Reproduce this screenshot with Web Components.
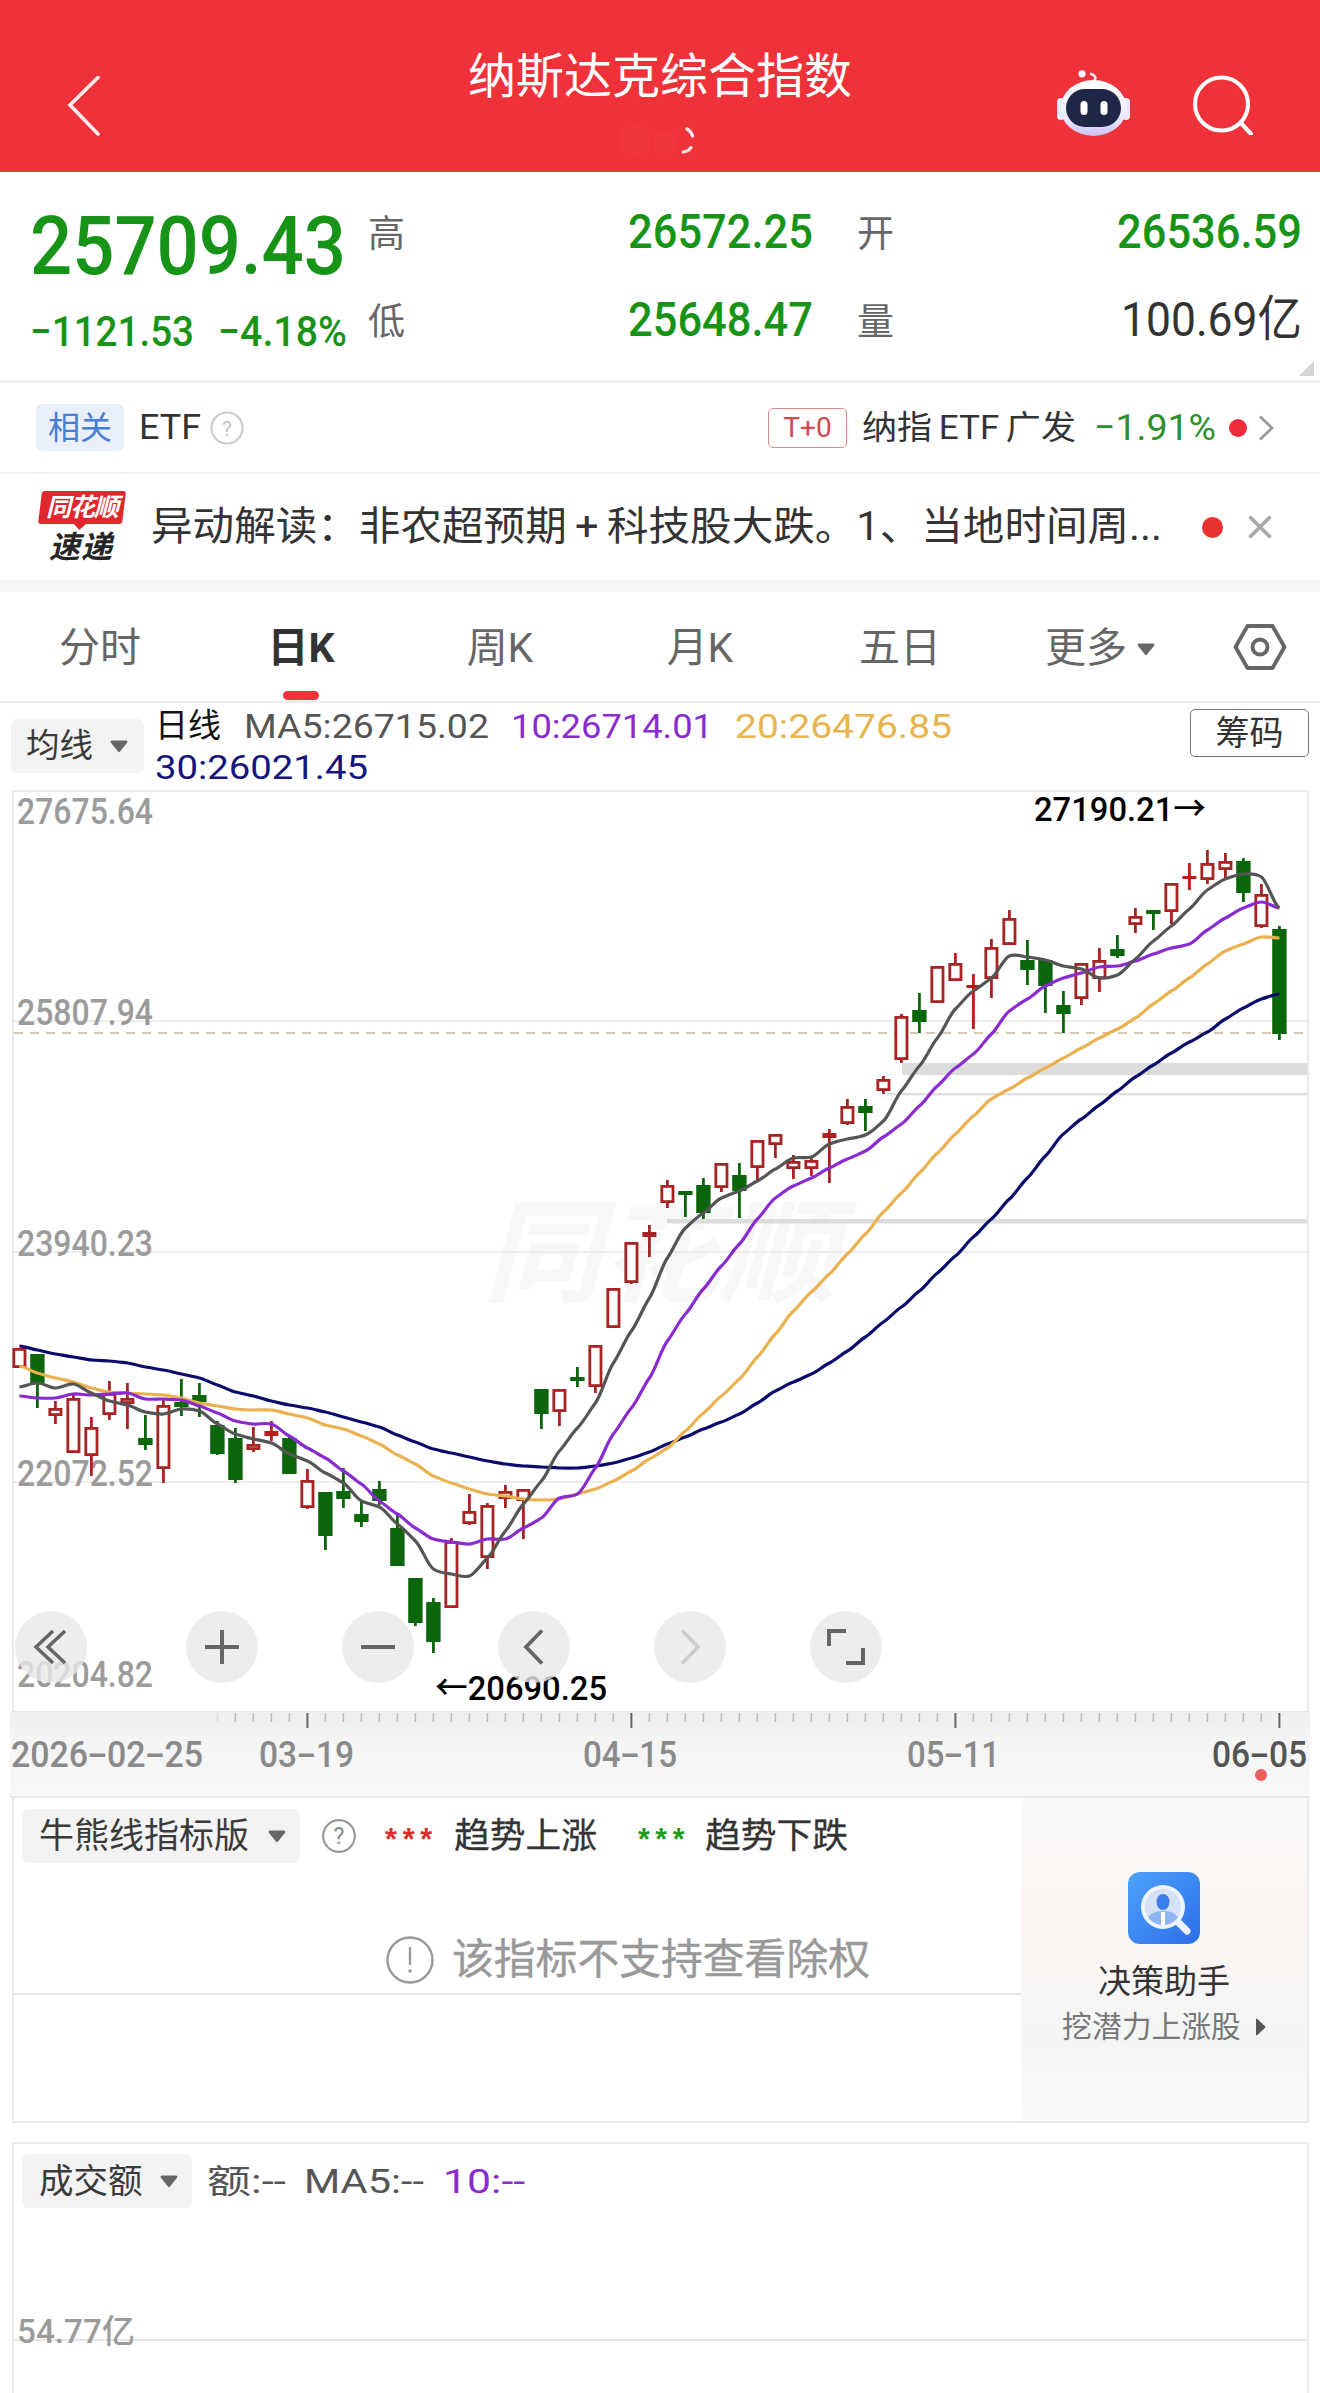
<!DOCTYPE html>
<html lang="zh-CN"><head><meta charset="utf-8"><title>纳斯达克综合指数</title>
<style>
html,body{margin:0;padding:0;background:#fff}
body{width:1320px;height:2393px;overflow:hidden;font-family:Roboto,"Noto Sans CJK SC",sans-serif;color:#333}
</style></head><body>
<top-bar></top-bar>
<quote-panel></quote-panel>
<etf-row></etf-row>
<news-row></news-row>
<period-tabs></period-tabs>
<legend-row></legend-row>
<kline-chart></kline-chart>
<time-axis></time-axis>
<bull-panel></bull-panel>
<volume-panel></volume-panel>
<script>
const dash='<span style="display:inline-block;width:.56em;text-align:center;transform:scaleX(1.75)">-</span>';
class FitText extends HTMLElement{
  constructor(){super();this.attachShadow({mode:'open'}).innerHTML='<style>:host{display:inline-block;white-space:nowrap;line-height:1;flex:none}span{display:inline-block;transform-origin:0 50%}</style><span><slot></slot></span>';}
  connectedCallback(){const w=+this.getAttribute('w');if(!w)return;const s=this.shadowRoot.querySelector('span');const n=s.getBoundingClientRect().width;this.style.width=w+'px';if(n)s.style.transform='scaleX('+(w/n)+')';}
}
customElements.define('fit-text',FitText);
const def=(n,html,after)=>customElements.define(n,class extends HTMLElement{constructor(){super();this.attachShadow({mode:'open'}).innerHTML=html;if(after)after(this.shadowRoot);}});

def('drop-tag',`<style>
:host{display:inline-flex;align-items:center;height:54px;background:#f3f3f3;border-radius:6px;padding:0 var(--pr,14px) 0 var(--pl,17px);gap:var(--gap,19px);color:#3a3a3a;line-height:1;flex:none;box-sizing:border-box;white-space:nowrap}
svg{display:block;flex:none}
</style><slot></slot><svg width="18" height="14" viewBox="0 0 18 14"><path d="M2 1.500h14a1.400 1.400 0 0 1 1.100 2.200L10 12.600a1.300 1.300 0 0 1-2 0L.9 3.700A1.400 1.400 0 0 1 2 1.500z" fill="#666"/></svg>`);

def('top-bar',`<style>
:host{display:grid;grid-template-columns:1fr auto 1fr;height:172px;background:#EF323A;color:#fff}
.l{padding:76px 0 0 67px}
.c{padding-top:53px;display:flex;flex-direction:column;align-items:center}
h1{margin:0;font-weight:400;font-size:48px;line-height:48px;white-space:nowrap}
.sp{margin-top:21px;display:block}
.r{display:flex;justify-content:flex-end;padding:70px 67px 0 0;gap:63px;align-items:flex-start}
svg{display:block}
.s{margin-top:5px}
</style>
<div class="l"><svg width="34" height="60" viewBox="0 0 34 60"><path d="M31 1.500 3 29l28 29" fill="none" stroke="#fdeaea" stroke-width="3.600" stroke-linecap="round"/></svg></div>
<div class="c"><h1>纳斯达克综合指数</h1>
<svg class="sp" width="90" height="36" viewBox="0 0 90 36"><ellipse cx="20" cy="18" rx="16" ry="15" fill="#fff" opacity=".018"/><ellipse cx="50" cy="20" rx="12" ry="12" fill="#fff" opacity=".02"/><path d="M72 7q4 2 5.500 7" stroke="#fff" stroke-width="3.200" fill="none" stroke-linecap="round" opacity=".9"/><path d="M68 30q5-.500 8-4.500" stroke="#fff" stroke-width="3.200" fill="none" stroke-linecap="round" opacity=".85"/></svg></div>
<div class="r">
<svg width="73" height="66" viewBox="0 0 73 66"><defs><linearGradient id="h" x1="0" y1="0" x2="0" y2="1"><stop offset="0" stop-color="#fff"/><stop offset=".7" stop-color="#ebe7fc"/><stop offset="1" stop-color="#c9c1f2"/></linearGradient></defs>
<path d="M37 11c3-3 1-6-4-7.500" fill="none" stroke="#efeafc" stroke-width="2.500"/><circle cx="25" cy="3.800" r="3.600" fill="#f4f0fd"/>
<rect x="0" y="28" width="8" height="22" rx="4" fill="#ece9fb"/><rect x="65" y="28" width="8" height="22" rx="4" fill="#ece9fb"/>
<ellipse cx="36.500" cy="38" rx="33" ry="28" fill="url(#h)"/>
<rect x="9" y="19" width="55" height="38" rx="19" fill="#1e2747"/>
<rect x="23.500" y="31" width="7" height="14" rx="3.500" fill="#fff"/><rect x="43.500" y="31" width="7" height="14" rx="3.500" fill="#fff"/></svg>
<svg class="s" width="60" height="60" viewBox="0 0 60 60"><circle cx="28.500" cy="29" r="26.500" fill="none" stroke="#fff" stroke-width="4"/><path d="M48 48l10 11" stroke="#fff" stroke-width="4.200" stroke-linecap="round"/></svg>
</div>`);

def('quote-panel',`<style>
:host{display:flex;position:relative;height:211px;box-sizing:border-box;border-bottom:3px solid #f0f0f0;padding-left:30px;background:#fff}
.left{width:338px;flex:none;padding-top:34px}
.px{font-size:81px;font-weight:500;color:#179417;display:block}
.sub{display:flex;margin-top:24px;gap:24px;font-size:42px;color:#179417;font-weight:500}
.g{display:grid;grid-template-columns:36px 409px 44px 37px 408px;grid-auto-rows:88px;align-items:center;margin-top:15px;height:176px}
.lab{font-size:37px;line-height:1;color:#666;position:relative;top:3px}
.v{justify-self:end;font-size:49px;color:#179417;font-weight:500}
.tri{position:absolute;right:6px;bottom:4px;width:15px;height:15px;background:#d6d6d6;clip-path:polygon(100% 0,100% 100%,0 100%)}
</style>
<div class="left"><fit-text class="px" w="316">25709.43</fit-text><div class="sub"><fit-text w="164">${'−'}1121.53</fit-text><fit-text w="129">${'−'}4.18%</fit-text></div></div>
<div class="g">
<div class="lab">高</div><fit-text class="v" w="185">26572.25</fit-text><span></span><div class="lab">开</div><fit-text class="v" w="185">26536.59</fit-text>
<div class="lab">低</div><fit-text class="v" w="185">25648.47</fit-text><span></span><div class="lab">量</div><fit-text class="v" w="181" style="color:#333;font-weight:400">100.69亿</fit-text>
</div><div class="tri"></div>`);

def('etf-row',`<style>
:host{display:flex;align-items:center;height:89px;box-sizing:content-box;border-bottom:2px solid #efefef;padding:0 46px 0 36px;line-height:1}
.tag{width:88px;height:47px;background:#e9f0fb;border-radius:6px;color:#4a7cd4;font-size:32px;display:flex;align-items:center;justify-content:center;flex:none}
.etf{margin-left:15px;font-size:35px;color:#333}
.q{margin-left:9px;display:block}
.sp{flex:1}
.t0{width:79px;height:40px;box-sizing:border-box;border:1.500px solid #d8888e;border-radius:5px;color:#d4484f;font-size:28px;display:flex;align-items:center;justify-content:center;flex:none}
.n{margin-left:15px;font-size:33px;color:#333;word-spacing:-2px}
.p{margin-left:18px;font-size:37px;color:#2e8f2e}
.dot{width:18px;height:18px;border-radius:50%;background:#f02c3a;margin-left:13px;flex:none}
.ch{margin-left:11px;display:block}
</style>
<div class="tag">相关</div><fit-text class="etf" w="62">ETF</fit-text>
<svg class="q" width="34" height="34" viewBox="0 0 34 34"><circle cx="17" cy="17" r="15.500" fill="none" stroke="#ccc" stroke-width="2.200"/><text x="17" y="24.500" font-size="21" text-anchor="middle" fill="#c4c4c4" font-family="Roboto">?</text></svg>
<div class="sp"></div>
<div class="t0">T+0</div><fit-text class="n" w="214">纳指 ETF 广发</fit-text><fit-text class="p" w="122">${'−'}1.91%</fit-text><div class="dot"></div>
<svg class="ch" width="16" height="26" viewBox="0 0 16 26"><path d="M2 1.500 14 13 2 24.500" fill="none" stroke="#999" stroke-width="2.800"/></svg>`);

def('news-row',`<style>
:host{display:flex;align-items:center;height:106px;border-bottom:12px solid #f5f5f5;padding-left:37px;line-height:1;position:relative}
.logo{width:88px;height:72px;flex:none;display:flex;flex-direction:column;align-items:center}
.redb{width:84px;height:37px;background:#e0272d;border-radius:3px;transform:skewX(-7deg);display:flex;align-items:center;justify-content:center;color:#fff;position:relative;margin-left:1px}
.redb:after{content:"";position:absolute;left:36px;bottom:-6px;border:6px solid transparent;border-top-color:#e0272d;border-bottom:0}
.redb i{font-size:25px;font-weight:700;font-style:italic;transform:skewX(7deg);letter-spacing:-1px}
.su{font-size:31px;font-weight:700;font-style:italic;color:#262626;margin-top:8px;letter-spacing:1px}
.t{margin-left:26px;font-size:40px;color:#333}
.t b{font-weight:400;margin:0 8px}
.d{width:21px;height:21px;border-radius:50%;background:#e8322f;margin-left:40px;flex:none}
.x{margin-left:25px;display:block}
</style>
<div class="logo"><div class="redb"><i>同花顺</i></div><div class="su">速递</div></div>
<fit-text class="t" w="1011">异动解读：非农超预期<b>+</b>科技股大跌。1、当地时间周...</fit-text><div class="d"></div>
<svg class="x" width="24" height="24" viewBox="0 0 24 24"><path d="M1.500 1.500l21 21M22.500 1.500l-21 21" stroke="#aaa" stroke-width="3.800"/></svg>`);

def('period-tabs',`<style>
:host{display:grid;grid-template-columns:repeat(6,200px) 120px;height:109px;border-bottom:2px solid #ececec;font-size:41px;line-height:1;color:#666}
.t{display:flex;flex-direction:column;align-items:center;padding-top:36px;box-sizing:border-box}
.a{color:#333;font-weight:700}
.a b{display:block;width:36px;height:9px;border-radius:5px;background:#ef3338;margin-top:22px}
.m{display:flex;align-items:center;gap:10px}
svg{display:block}
</style>
<div class="t"><span>分时</span></div><div class="t a" style="padding-left:2px"><span>日K</span><b></b></div><div class="t"><span>周K</span></div><div class="t"><span>月K</span></div><div class="t"><span>五日</span></div>
<div class="t"><div class="m"><span>更多</span><svg width="18" height="14" viewBox="0 0 18 14"><path d="M2 1.500h14a1.400 1.400 0 0 1 1.100 2.200L10 12.600a1.300 1.300 0 0 1-2 0L.9 3.700A1.400 1.400 0 0 1 2 1.500z" fill="#666"/></svg></div></div>
<div class="t" style="padding-top:31px"><svg width="54" height="48" viewBox="0 0 54 48"><path d="M2.500 24 14.500 3h25l12 21-12 21h-25z" fill="none" stroke="#666" stroke-width="3.800" stroke-linejoin="round"/><circle cx="27" cy="24" r="7.500" fill="none" stroke="#666" stroke-width="3.800"/></svg></div>`);

def('legend-row',`<style>
:host{display:flex;height:87px;padding-left:11px;font-size:34px;line-height:1;color:#555;box-sizing:border-box}
drop-tag{margin-top:16px;--pl:15px;--gap:17px;--pr:16px;font-size:33.500px;width:133px}
.lines{margin-left:11px;padding-top:2px;flex:none}
.row{display:flex;height:41px;align-items:center}
.btn{margin:6px 11px 0 auto;width:119px;height:48px;box-sizing:border-box;border:1.500px solid #777;border-radius:5px;color:#333;display:flex;align-items:center;justify-content:center;flex:none}
</style>
<drop-tag>均线</drop-tag>
<div class="lines"><div class="row"><fit-text w="66" style="color:#111;font-size:33px">日线</fit-text><fit-text w="245" style="margin-left:23px">MA5:26715.02</fit-text><fit-text w="202" style="margin-left:22px;color:#8a2bd0">10:26714.01</fit-text><fit-text w="217" style="margin-left:22px;color:#e8b44e">20:26476.85</fit-text></div>
<div class="row"><fit-text w="213" style="color:#15157d">30:26021.45</fit-text></div></div>
<div class="btn">筹码</div>`);

(function(){
const X=i=>19.4+18*i;
const C=[['r',1347,1367],['g',1353,1382,1353,1407],['r',1407,1415,1400,1423],['r',1397,1452,1392,1452],['r',1426,1455,1416,1475],['r',1392,1414,1380,1419],['r',1397,1403,1382,1428],['g',1437,1444,1414,1449],['r',1404,1468,1398,1482],['g',1401,1406,1378,1415],['g',1394,1401,1382,1416],['g',1424,1453,1420,1454],['g',1437,1479,1427,1482],['r',1443,1449,1426,1451],['f',1430,1435,1420,1440],['g',1437,1473,1434,1473],['r',1479,1507,1468,1508],['g',1491,1535,1491,1549],['g',1490,1498,1467,1507],['g',1513,1521,1500,1526],['g',1488,1500,1480,1504],['g',1527,1565,1512,1565],['g',1577,1622,1577,1625],['g',1601,1641,1597,1652],['r',1540,1607,1537,1607],['r',1510,1523,1493,1524],['r',1504,1557,1502,1568],['r',1490,1498,1484,1507],['r',1488,1500,1488,1538],['g',1388,1413,1388,1428],['r',1388,1411,1388,1425],['g',1376,1380,1366,1386],['r',1344,1386,1344,1392],['r',1287,1327],['r',1241,1282,1241,1283],['r',1231,1236,1224,1256],['r',1184,1202,1179,1207],['g',1190,1194,1190,1216],['g',1184,1212,1177,1218],['r',1162,1187,1162,1191],['g',1174,1190,1162,1217],['r',1139,1167,1139,1179],['r',1133,1144,1133,1157],['r',1160,1168,1154,1178],['r',1159,1168,1155,1175],['r',1132,1137,1128,1182],['r',1105,1123,1098,1124],['g',1105,1112,1098,1130],['r',1078,1090,1075,1093],['r',1015,1059,1013,1062],['g',1009,1021,992,1032],['r',965,1002],['r',962,980,952,980],['f',984,987,973,1028],['r',946,978,938,997],['r',917,944,909,944],['g',959,969,939,984],['g',959,985,958,1012],['g',1004,1013,990,1032],['r',962,998,962,1004],['r',959,978,947,991],['g',948,955,934,957],['r',915,924,907,932],['g',909,913,909,929],['r',882,911,882,923],['f',875,878,862,889],['r',862,879,849,883],['r',860,869,852,878],['g',860,892,857,901],['r',893,926,883,927],['g',928,1033,925,1039]];
const MA5=[1386,1382,1387,1383,1392,1400,1404,1411,1413,1408,1410,1423,1433,1438,1442,1453,1460,1472,1482,1500,1506,1523,1540,1568,1573,1575,1557,1530,1503,1480,1450,1427,1402,1362,1330,1297,1257,1227,1212,1197,1190,1180,1168,1157,1156,1143,1138,1134,1120,1090,1065,1037,1008,990,977,955,956,959,965,968,977,974,958,940,925,908,889,878,873,876,907];
const MA10=[1395,1397,1397,1393,1394,1393,1392,1398,1398,1399,1405,1412,1420,1423,1423,1435,1447,1457,1470,1483,1500,1513,1527,1538,1541,1543,1538,1538,1527,1517,1497,1493,1467,1433,1407,1377,1340,1313,1288,1265,1243,1218,1197,1185,1177,1167,1158,1150,1136,1123,1105,1085,1067,1053,1033,1010,998,985,977,972,966,965,960,953,947,943,929,917,907,901,907];
const MA20=[1365,1372,1377,1381,1387,1391,1392,1393,1394,1397,1402,1405,1408,1409,1409,1413,1417,1424,1428,1435,1443,1454,1463,1475,1482,1488,1493,1495,1498,1499,1498,1493,1488,1480,1470,1458,1447,1430,1412,1395,1378,1356,1333,1310,1291,1273,1253,1233,1211,1192,1172,1152,1133,1115,1098,1088,1077,1067,1057,1047,1037,1028,1017,1003,990,977,963,950,943,936,937];
const MA30=[1345,1349,1353,1356,1359,1360,1362,1366,1369,1373,1377,1384,1391,1395,1400,1404,1407,1411,1416,1421,1426,1434,1441,1448,1452,1456,1460,1463,1465,1466,1467,1467,1465,1462,1457,1451,1443,1436,1428,1421,1413,1402,1390,1381,1373,1362,1350,1336,1321,1306,1290,1272,1255,1236,1218,1198,1177,1155,1133,1118,1104,1090,1076,1064,1052,1041,1031,1018,1007,998,993];
const R='#a82424',G='#0b650b';
let s='';
C.forEach((c,i)=>{const x=X(i),[t,a,b,w1,w2]=c;const col=t==='g'?G:(t==='f'?'#bd1a1a':R);
 if(w1!=null)s+=`<line x1="${x}" x2="${x}" y1="${w1}" y2="${w2}" stroke="${col}" stroke-width="2.800"/>`;
 if(t==='g')s+=`<rect x="${x-7.2}" y="${a}" width="14.400" height="${b-a}" fill="${G}"/>`;
 else if(t==='f')s+=`<rect x="${x-7}" y="${a}" width="14" height="${b-a}" fill="${col}"/>`;
 else s+=`<rect x="${x-5.6}" y="${a+1.4}" width="11.200" height="${b-a-2.8}" fill="#fff" stroke="${R}" stroke-width="2.800"/>`;});
const L=(a,col,w)=>{let d='M'+X(0)+' '+a[0];const k=.12;for(let i=0;i<a.length-1;i++){const p=a[Math.max(i-1,0)],q=a[i],r=a[i+1],u=a[Math.min(i+2,a.length-1)];d+=' C'+(X(i)+6)+' '+(q+(r-p)*k)+' '+(X(i+1)-6)+' '+(r-(u-q)*k)+' '+X(i+1)+' '+r;}return `<path fill="none" stroke="${col}" stroke-width="${w}" stroke-linejoin="round" d="${d}"/>`;};
const yl=(t,y)=>`<text x="17" y="${y}" class="yl" textLength="136" lengthAdjust="spacingAndGlyphs">${t}</text>`;
const grid=[1020,1251,1481].map(y=>`<rect x="13" y="${y-.7}" width="1295" height="1.600" fill="#e9e9e9"/>`).join('');
def('kline-chart',`<style>
:host{display:block;position:relative;height:922px;width:1320px;overflow:hidden}
svg{display:block}
.yl{font:500 36px Roboto,sans-serif;fill:#9b9b9b}
.mk{font:500 34px Roboto,"Noto Sans CJK SC",sans-serif;fill:#000}
.wm{font:italic 700 112px "Noto Sans CJK SC",sans-serif;fill:#f7f7f7}
.nav{position:absolute;left:15px;top:821px;display:flex;gap:84px}
.nav div{width:72px;height:72px;border-radius:50%;background:rgba(232,232,232,.8);display:flex;align-items:center;justify-content:center}
.nav div:first-child{margin-right:15px}
.nav svg{display:block}
</style>
<svg width="1320" height="922" viewBox="0 789 1320 922">
<rect x="12" y="789" width="2" height="922" fill="#eaeaea"/><rect x="1307" y="789" width="2" height="922" fill="#eaeaea"/><rect x="12" y="789" width="1297" height="2" fill="#eaeaea"/><rect x="12" y="1710" width="1297" height="1.500" fill="#e8e8e8"/>
<text x="483" y="1292" class="wm" textLength="354" lengthAdjust="spacingAndGlyphs">同花顺</text>
${grid}
<rect x="902" y="1062" width="405" height="12" fill="#dcdcdc"/><rect x="887" y="1092" width="420" height="2.400" fill="#dfdfdf"/><rect x="667" y="1218" width="640" height="4.500" fill="#dcdcdc"/>
<line x1="14" x2="1307" y1="1032" y2="1032" stroke="#c9bb94" stroke-width="1.600" stroke-dasharray="9 7"/>
${yl('27675.64',823)}${yl('25807.94',1024)}${yl('23940.23',1255)}${yl('22072.52',1485)}${yl('20204.82',1686)}
${s}
${L(MA30,'#0b0b6e',3.2)}${L(MA20,'#ebb14f',3.2)}${L(MA10,'#8a2bd2',3.2)}${L(MA5,'#555',3.2)}
<text x="1034" y="820" class="mk" textLength="172" lengthAdjust="spacingAndGlyphs">27190.21→</text>
<text x="435" y="1699" class="mk" textLength="172" lengthAdjust="spacingAndGlyphs">←20690.25</text>
</svg>
<div class="nav">
<div><svg width="36" height="36" viewBox="0 0 36 36"><path d="M20 2 3 18l17 16M32 2 15 18l17 16" fill="none" stroke="#666" stroke-width="3.500"/></svg></div>
<div><svg width="36" height="36" viewBox="0 0 36 36"><path d="M18 1v34M1 18h34" stroke="#666" stroke-width="4"/></svg></div>
<div><svg width="36" height="36" viewBox="0 0 36 36"><path d="M1 18h34" stroke="#666" stroke-width="4"/></svg></div>
<div><svg width="24" height="36" viewBox="0 0 24 36"><path d="M20 1.500 4 18l16 16.500" fill="none" stroke="#666" stroke-width="3.800"/></svg></div>
<div><svg width="24" height="36" viewBox="0 0 24 36"><path d="M4 1.500 20 18 4 34.500" fill="none" stroke="#ccc" stroke-width="3.800"/></svg></div>
<div><svg width="40" height="38" viewBox="0 0 40 38"><path d="M3 18V3h17M37 20v15H20" fill="none" stroke="#666" stroke-width="4"/></svg></div>
</div>`);
let t='';
for(let i=11;i<=70;i++){const x=X(i),big=(i-16)%18===0;t+=`<line x1="${x}" x2="${x}" y1="1" y2="${big?16:10}" stroke="${big?'#666':'#bdbdbd'}" stroke-width="${big?2:1.5}" opacity="${i==11?.35:1}"/>`;}
def('time-axis',`<style>
:host{display:block;position:relative;height:86px;margin:0 10px;box-sizing:border-box;background:linear-gradient(#eeeeee 0,#f4f4f4 30%,#f8f8f8 100%);border-bottom:2px solid #e9e9e9}
svg{display:block;margin-left:-10px}
.d{display:flex;padding-left:1px;margin-top:7px;font-size:36px;font-weight:500;color:#8a8a8a;line-height:1}
.dot{position:absolute;left:1245px;top:57px;width:12px;height:12px;border-radius:50%;background:#ee6060}
</style>
<svg width="1320" height="18" viewBox="0 0 1320 18">${t}</svg>
<div class="d"><fit-text w="192">2026${dash}02${dash}25</fit-text><fit-text w="95" style="margin-left:56px">03${dash}19</fit-text><fit-text w="94" style="margin-left:229px">04${dash}15</fit-text><fit-text w="93" style="margin-left:230px">05${dash}11</fit-text><fit-text w="95" style="margin-left:212px;color:#555">06${dash}05</fit-text></div>
<div class="dot"></div>`);
})();

def('bull-panel',`<style>
:host{display:grid;grid-template-columns:1fr 286px;height:325px;margin:0 11px 0 12px;box-sizing:border-box;border:2px solid #eaeaea;border-top:0;line-height:1}
.left{min-width:0}
.bar{display:flex;align-items:center;height:54px;margin-top:11px;padding-left:8px;font-size:35px;color:#333}
svg{display:block;flex:none}
.st{font:700 32px "Liberation Sans",sans-serif;letter-spacing:6px;position:relative;top:3px}
.msg{display:flex;align-items:center;margin:72px 0 0 372px;height:50px;color:#999;font-size:41.600px;-webkit-text-stroke:.4px #999}
.ln{height:1.500px;background:#e6e6e6;margin-top:8px}
.ad{background:linear-gradient(180deg,#fafafa 0,#fbf5f3 35%,#f8f5f4 55%,#f3f5f5 75%,#fbfbfb 100%);display:flex;flex-direction:column;align-items:center;padding-top:74px;box-sizing:border-box;color:#333}
.ad .a{font-size:33px;margin-top:21px}
.ad .b{font-size:29.800px;color:#777;margin-top:14px;display:flex;align-items:center;gap:14px}
</style>
<div class="left"><div class="bar"><drop-tag style="font-size:35px;width:278px">牛熊线指标版</drop-tag>
<svg style="margin-left:22px" width="34" height="34" viewBox="0 0 34 34"><circle cx="17" cy="17" r="15.800" fill="none" stroke="#999" stroke-width="2.200"/><text x="17" y="25" font-size="23" text-anchor="middle" fill="#888" font-family="Roboto">?</text></svg>
<fit-text class="st" w="53" style="margin-left:29px;color:#d8312d">***</fit-text><fit-text w="143" style="margin-left:16px;-webkit-text-stroke:.3px #333">趋势上涨</fit-text>
<fit-text class="st" w="52" style="margin-left:41px;color:#1e9a1e">***</fit-text><fit-text w="143" style="margin-left:15px;-webkit-text-stroke:.3px #333">趋势下跌</fit-text></div>
<div class="msg"><svg width="48" height="48" viewBox="0 0 48 48"><circle cx="24" cy="24" r="22.500" fill="none" stroke="#9a9a9a" stroke-width="2.400"/><path d="M24 11v18" stroke="#9a9a9a" stroke-width="2.400"/><circle cx="24" cy="35" r="1.800" fill="#9a9a9a"/></svg><fit-text w="418" style="margin-left:18px">该指标不支持查看除权</fit-text></div>
<div class="ln"></div></div>
<div class="ad"><svg width="72" height="72" viewBox="0 0 72 72"><defs><linearGradient id="b" x1="0" y1="0" x2="1" y2="1"><stop offset="0" stop-color="#4ea2fb"/><stop offset="1" stop-color="#2c6eea"/></linearGradient><clipPath id="cl"><circle cx="35" cy="35" r="18"/></clipPath></defs>
<rect width="72" height="72" rx="12" fill="url(#b)"/><path d="M49 49l10 10" stroke="#e9f1ff" stroke-width="7" stroke-linecap="round"/><circle cx="35" cy="35" r="22" fill="#eef3fd"/><circle cx="35" cy="35" r="18" fill="#d5e1f5"/>
<g clip-path="url(#cl)"><ellipse cx="35" cy="30" rx="6.500" ry="8" fill="#3b7cec"/><path d="M18 54c0-11 7-15 17-15s17 4 17 15z" fill="#8fb4ef"/><path d="M33 40h4v14h-4z" fill="#fff"/></g></svg>
<div class="a">决策助手</div><div class="b"><span>挖潜力上涨股</span><svg width="11" height="18" viewBox="0 0 11 18"><path d="M1 1.500v15a.8.8 0 0 0 1.300.6l8-7.500a.8.8 0 0 0 0-1.200l-8-7.500A.8.8 0 0 0 1 1.500z" fill="#555"/></svg></div></div>`);

def('volume-panel',`<style>
:host{display:block;position:relative;height:252px;margin:19px 11px 0 12px;box-sizing:border-box;border:2px solid #eaeaea;border-bottom:0;line-height:1}
.bar{display:flex;align-items:center;height:54px;margin-top:10px;padding-left:8px;font-size:33px;color:#555}
drop-tag{font-size:34.500px;width:170px;--pr:11px;--gap:17px}
.ln{height:1.500px;background:#e6e6e6;margin-top:131px}
.yl{position:absolute;left:3px;top:171px;font-size:33px;font-weight:500;color:#9b9b9b}
</style>
<div class="bar"><drop-tag>成交额</drop-tag><fit-text w="79" style="margin-left:15px">额:--</fit-text><fit-text w="120" style="margin-left:18px">MA5:--</fit-text><fit-text w="82" style="margin-left:19px;color:#8a2bd0">10:--</fit-text></div>
<div class="ln"></div>
<fit-text class="yl" w="118">54.77亿</fit-text>`);
</script>
</body></html>
